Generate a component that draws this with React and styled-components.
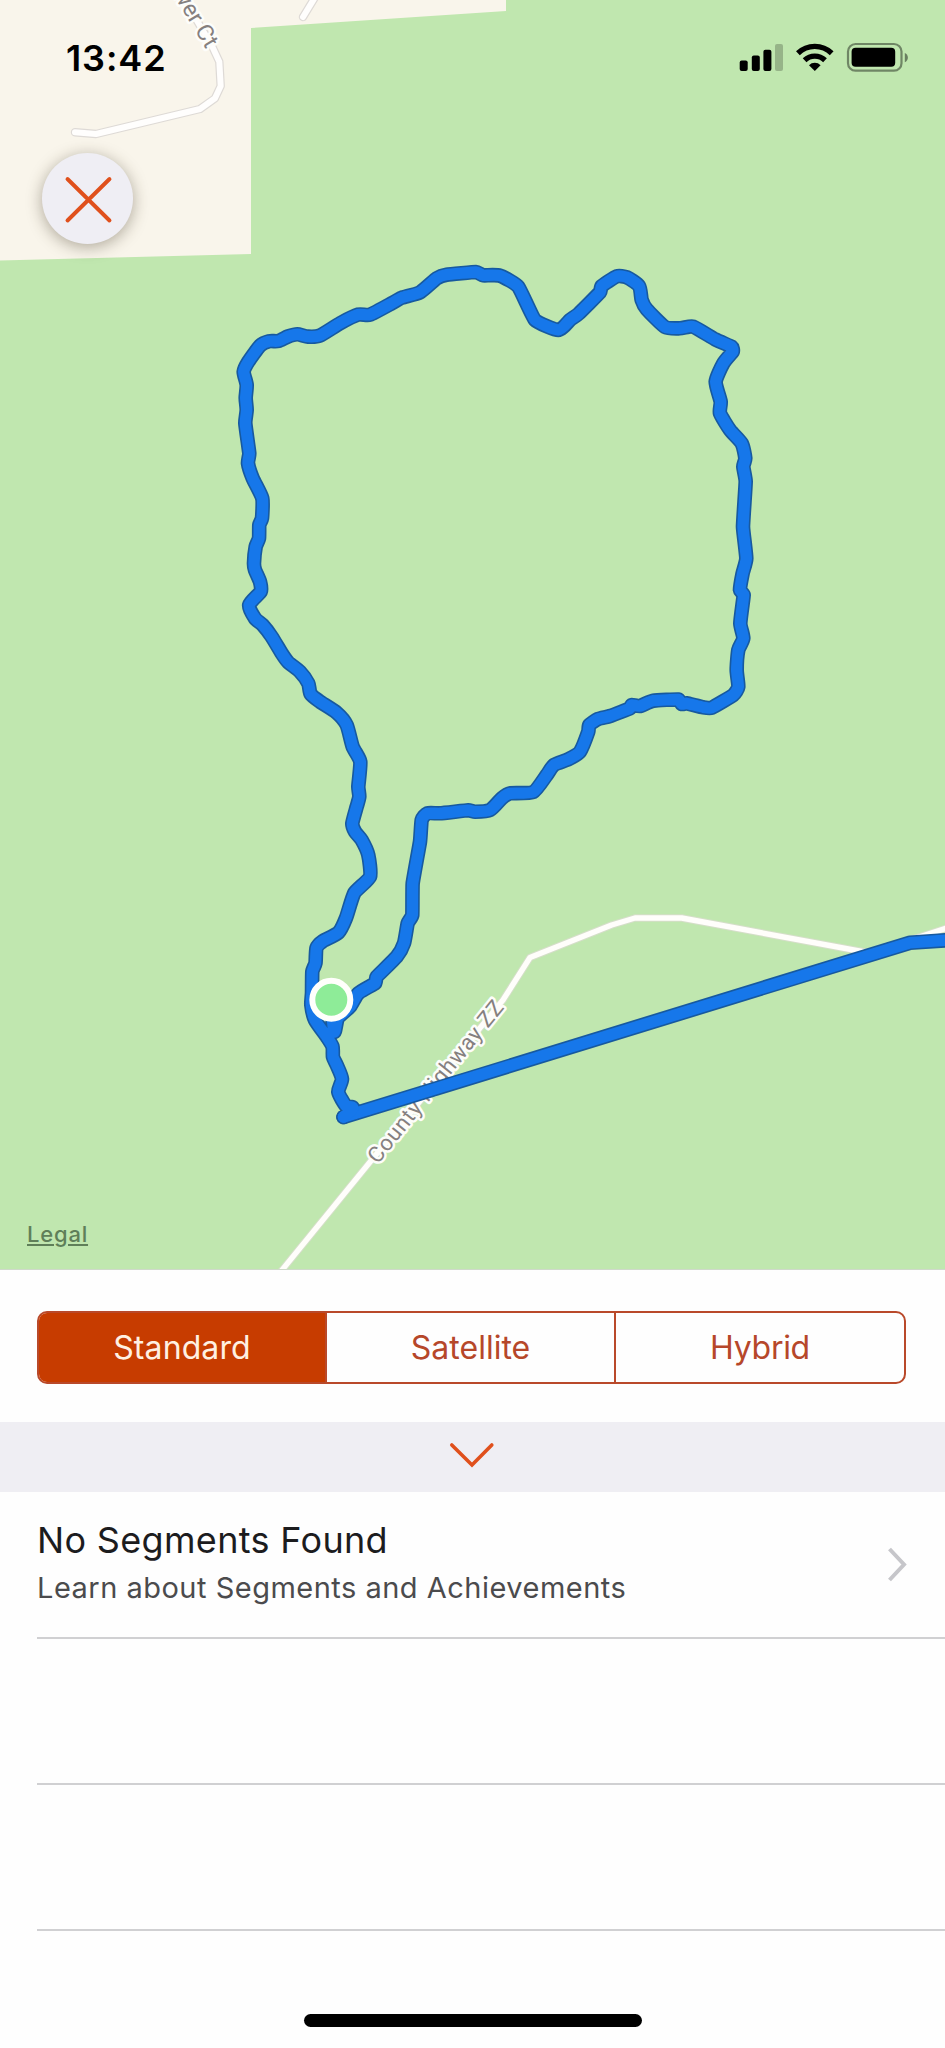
import React, { useState } from 'react';
import styled, { createGlobalStyle } from 'styled-components';

const GlobalStyle = createGlobalStyle`
  * { box-sizing: border-box; }
  body { margin: 0; background: #fefefe; font-family: Inter, "Liberation Sans", sans-serif; }
  button { font: inherit; border: 0; padding: 0; background: none; }
`;

const Screen = styled.main`
  width: 945px;
  height: 2048px;
  display: flex;
  flex-direction: column;
  background: #fefefe;
  overflow: hidden;
`;

const MapPane = styled.section`
  position: relative;
  flex: none;
  height: 1270px;
  background: #c0e7af;
  border-bottom: 1px solid #cfd9ca;
`;

const MapCanvas = styled.svg`
  display: block;
  width: 945px;
  height: 1269px;
`;

const StatusBar = styled.header`
  position: absolute;
  inset: 0 0 auto 0;
  height: 115px;
  padding: 0 36px 0 66px;
  display: flex;
  align-items: center;
  justify-content: space-between;
  color: #000;
`;

const Clock = styled.time`
  font-size: 36px;
  font-weight: 600;
  line-height: 44px;
  letter-spacing: 0.9px;
`;

const StatusIcons = styled.svg`
  display: block;
  width: 170px;
  height: 32px;
`;

const CloseButton = styled.button`
  position: absolute;
  top: 153px;
  left: 42px;
  width: 91px;
  height: 91px;
  display: grid;
  place-items: center;
  border-radius: 50%;
  background: #efeef4;
  box-shadow: 0 3px 16px rgba(60, 50, 30, 0.4);
`;

const LegalLink = styled.a`
  position: absolute;
  left: 27px;
  bottom: 21px;
  font-size: 22px;
  line-height: 28px;
  font-weight: 500;
  letter-spacing: 0.8px;
  color: #5f7f59;
  text-decoration: underline;
  text-decoration-thickness: 2px;
  text-underline-offset: 2px;
`;

const RoadLabel = styled.text`
  font-family: Roboto, "Liberation Sans", sans-serif;
  font-size: ${(p) => p.$size}px;
  fill: #85807f;
  stroke: #fdfdfa;
  stroke-width: 5px;
  stroke-linejoin: round;
  paint-order: stroke;
`;

const ModeBar = styled.div`
  flex: none;
  height: 152px;
  padding: 41px 39px 38px 37px;
`;

const Segmented = styled.div`
  display: grid;
  grid-template-columns: 286px 289px 1fr;
  height: 73px;
  border: 2px solid #b9492a;
  border-radius: 10px;
  overflow: hidden;
`;

const Segment = styled.button`
  font-size: 32px;
  line-height: 40px;
  letter-spacing: ${(p) => p.$tracking};
  color: ${(p) => (p.$active ? '#fff0e2' : '#b6472a')};
  background: ${(p) => (p.$active ? '#c73c00' : 'transparent')};
  & + & { border-left: 2px solid ${(p) => (p.$afterActive ? '#c73c00' : '#b9492a')}; }
`;

const DrawerHandle = styled.button`
  flex: none;
  height: 70px;
  display: flex;
  justify-content: center;
  align-items: center;
  background: #efeef3;
  padding: 0 2px 4px 0;
`;

const List = styled.ul`
  flex: none;
  margin: 0;
  padding: 0 0 0 37px;
  list-style: none;
`;

const Row = styled.li`
  display: flex;
  align-items: center;
  justify-content: space-between;
  height: ${(p) => p.$height}px;
  padding-right: 38px;
  border-bottom: 2px solid #d0d0d2;
`;

const RowText = styled.div`
  display: flex;
  flex-direction: column;
  gap: 4px;
  padding-bottom: 1px;
`;

const Title = styled.span`
  font-size: 36px;
  line-height: 44px;
  letter-spacing: 0.33px;
  color: #1c1c1e;
`;

const Subtitle = styled.span`
  font-size: 29px;
  line-height: 44px;
  letter-spacing: 0.49px;
  color: #4b4b4d;
`;

const HomeArea = styled.footer`
  flex: 1;
  display: flex;
  justify-content: center;
  align-items: flex-end;
  padding-bottom: 21px;
`;

const HomeIndicator = styled.div`
  width: 338px;
  height: 13px;
  border-radius: 7px;
  background: #000;
`;

const ROUTE = [
  [950, 940], [910, 942.7], [343.5, 1117], [353, 1108], [346, 1106], [338.3, 1092], [342, 1079],
  [336.7, 1065], [333, 1057], [332.5, 1046.5], [326.7, 1036.7], [315, 1020], [311.3, 1005],
  [312, 993], [312.3, 971.7], [315.5, 963], [316.5, 948], [323, 941], [338.5, 932.5], [346, 918],
  [354.3, 893], [370, 876.7], [368.3, 855], [361.7, 840], [355, 831.7], [352.3, 823.3],
  [356.7, 806.7], [359.3, 796.7], [358.3, 786.7], [360.3, 761.7], [352.7, 746.7], [346.7, 725],
  [336.7, 712.7], [320, 701.7], [310.7, 694], [308.3, 683.3], [300, 671.7], [288.3, 662.3],
  [281.7, 653.3], [271.7, 636.7], [262.7, 625], [255, 618.3], [249.2, 605], [260.7, 591.7],
  [260, 581.7], [255, 570], [254, 563.3], [255.7, 546.7], [259, 538.3], [259.3, 525],
  [262, 518.3], [262.3, 498.3], [252.7, 478.3], [248, 463.3], [249.3, 453.3], [245.3, 423.3],
  [246.7, 410], [245.7, 398], [246.7, 385], [243.7, 371.7], [248.3, 361.7], [260, 345.7],
  [269, 341.3], [278.3, 341], [288, 336.5], [297.3, 334.3], [308, 336.6], [320, 335.5],
  [340, 323.3], [358.3, 314.6], [370, 314.7], [391.7, 303.3], [401.7, 297.7], [420, 292.3],
  [436.7, 278.3], [446.7, 274.7], [476, 272], [483.3, 275.3], [500, 275.7], [518.3, 286.7],
  [535, 320], [558.3, 330], [570, 320], [578.3, 314], [600, 292.3], [601.7, 286],
  [616.7, 276.3], [626.7, 277.3], [639, 286], [641.7, 300], [646.7, 309.3], [665, 327],
  [680, 328.3], [693.3, 326.7], [715, 339.3], [731.7, 346.7], [732.7, 351.7], [723.3, 363.3],
  [715.7, 381.7], [720.7, 401.7], [720, 413.3], [730, 430], [741.7, 443.3], [745.3, 458.3],
  [743.3, 466.7], [745.7, 481.7], [743, 526.7], [746.3, 558.3], [742.5, 574], [740, 590],
  [743.7, 595], [740.3, 623.3], [743.3, 638.3], [738.3, 650], [736.7, 670], [738.3, 686.7],
  [733.3, 695], [711.7, 707.7], [703.3, 707.3], [686.7, 703.3], [681.7, 704], [678.3, 699.5],
  [653.3, 700.7], [640, 706], [631.7, 705], [630, 708.3], [610, 716], [598, 719], [589.3, 725],
  [588.3, 731.7], [580, 751.7], [568.3, 759.3], [554, 765], [546.7, 775], [533.3, 792],
  [510, 793.3], [501.7, 798.3], [490, 810], [475, 811.7], [468.3, 810.3], [440, 813.3],
  [427.3, 813.3], [421.7, 820], [420, 841.7], [412.7, 883.3], [412.3, 915], [407.7, 923.3],
  [404, 943.3], [396.7, 956.7], [376.7, 976.7], [375, 983.3], [358.3, 993.3], [350, 1006.7],
  [338, 1018], [334, 1031.5], [331, 1000],
];

// Softens the bends: each point's tangent is limited by its shorter neighbouring leg.
function smoothPath(points) {
  const dist = (a, b) => Math.hypot(b[0] - a[0], b[1] - a[1]);
  const handles = points.map((p, i) => {
    const prev = points[i - 1];
    const next = points[i + 1];
    if (!prev || !next) return [0, 0];
    const span = dist(prev, next) || 1;
    const reach = Math.min(dist(prev, p), dist(p, next), 16) * 0.24;
    return [((next[0] - prev[0]) / span) * reach, ((next[1] - prev[1]) / span) * reach];
  });
  return points.reduce((d, p, i) => {
    if (i === 0) return `M${p[0]} ${p[1]}`;
    const q = points[i - 1];
    const a = handles[i - 1];
    const b = handles[i];
    return `${d}C${q[0] + a[0]} ${q[1] + a[1]} ${p[0] - b[0]} ${p[1] - b[1]} ${p[0]} ${p[1]}`;
  }, '');
}
const routePath = smoothPath(ROUTE.slice(2));
const approachPath = 'M950 940L910 942.7L343.5 1117';

const MODES = [
  { name: 'Standard', tracking: '0.1px' },
  { name: 'Satellite', tracking: '0px' },
  { name: 'Hybrid', tracking: '-0.3px' },
];

function TrailMap() {
  return (
    <MapCanvas viewBox="0 0 945 1269" fill="none" strokeLinejoin="round" strokeLinecap="round">
      <path d="M0 0H506V11L251 28V254L0 260.5Z" fill="#f9f5eb" />
      {[['#dedad6', 8.4], ['#fffefd', 6]].map(([color, width]) => (
        <g key={color} stroke={color} strokeWidth={width}>
          <path d="M75 132.3L96 134L200 109L215 98.3L220.7 86L219.3 61.7L212 46L180 -8" />
          <path d="M303 17L317 -6" />
        </g>
      ))}
      {[['#d5dec9', 7.4], ['#fffefb', 5.4]].map(([color, width]) => (
        <g key={color} stroke={color} strokeWidth={width}>
          <path d="M278 1275L370 1162L503 1000L530 957.5L611.7 925L635 918H681.7L870 953L950 927" />
        </g>
      ))}
      <RoadLabel $size={22} transform="translate(435.5 1081.5) rotate(-51)" y="7.5" textAnchor="middle" textLength="202">County Highway ZZ</RoadLabel>
      <RoadLabel $size={23} transform="translate(212.5 45.5) rotate(59)" y="7.5" textAnchor="end">wer Ct</RoadLabel>
      {[['#17599f', 14.6], ['#1677ea', 11.4]].map(([color, width]) => (
        <g key={color} stroke={color} strokeWidth={width}>
          <path d={approachPath} />
          <path d={routePath} />
        </g>
      ))}
      <circle cx="331.3" cy="999.7" r="19" fill="#8eec98" stroke="#fffffc" strokeWidth="6" />
    </MapCanvas>
  );
}

function StatusGlyphs() {
  return (
    <StatusIcons viewBox="739 42 170 32" fill="none">
      <g fill="#000">
        <rect x="739.7" y="60.5" width="8" height="10.5" rx="2" />
        <rect x="751.8" y="55.5" width="8" height="15.5" rx="2" />
        <rect x="763.4" y="49.8" width="8" height="21.2" rx="2" />
        <rect x="775" y="44" width="8" height="27" rx="2" opacity="0.22" />
      </g>
      <g stroke="#000" strokeWidth="5.4">
        <path d="M797.9 53.2A24.4 24.4 0 0 1 831.7 53.2" />
        <path d="M804.6 60.2A14.8 14.8 0 0 1 825 60.2" />
      </g>
      <path d="M814.8 71L809 65.2A8.2 8.2 0 0 1 820.6 65.2Z" fill="#000" />
      <rect x="848" y="44" width="53.5" height="26.7" rx="7.5" stroke="#000" strokeOpacity="0.42" strokeWidth="2.2" />
      <rect x="851.6" y="47.8" width="43.6" height="19" rx="4" fill="#000" />
      <path d="M904.8 53C908.9 54.5 908.9 60.7 904.8 62.2Z" fill="#000" fillOpacity="0.45" />
    </StatusIcons>
  );
}

export default function App() {
  const [mode, setMode] = useState('Standard');
  return (
    <>
      <GlobalStyle />
      <Screen>
        <MapPane>
          <TrailMap />
          <StatusBar>
            <Clock>13:42</Clock>
            <StatusGlyphs />
          </StatusBar>
          <CloseButton aria-label="Close">
            <svg width="50" height="50" viewBox="0 0 50 50" fill="none" stroke="#e0501c" strokeWidth="3.9" strokeLinecap="round">
              <path d="M4.5 5L46.5 46.5M46.5 5L4.5 46.5" />
            </svg>
          </CloseButton>
          <LegalLink>Legal</LegalLink>
        </MapPane>
        <ModeBar>
          <Segmented>
            {MODES.map(({ name, tracking }, i) => (
              <Segment
                key={name}
                $active={mode === name}
                $afterActive={i > 0 && MODES[i - 1].name === mode}
                $tracking={tracking}
                onClick={() => setMode(name)}
              >
                {name}
              </Segment>
            ))}
          </Segmented>
        </ModeBar>
        <DrawerHandle aria-label="Collapse">
          <svg width="46" height="26" viewBox="0 0 46 26" fill="none" stroke="#e0501c" strokeWidth="3.6" strokeLinecap="round">
            <path d="M2.8 3L23 23L42.8 3" />
          </svg>
        </DrawerHandle>
        <List>
          <Row $height={147}>
            <RowText>
              <Title>No Segments Found</Title>
              <Subtitle>Learn about Segments and Achievements</Subtitle>
            </RowText>
            <svg width="20" height="36" viewBox="0 0 20 36" fill="none" stroke="#c6c6ca" strokeWidth="4">
              <path d="M2.5 2L17 17.5L2.5 33" />
            </svg>
          </Row>
          <Row $height={146} />
          <Row $height={146} />
        </List>
        <HomeArea>
          <HomeIndicator />
        </HomeArea>
      </Screen>
    </>
  );
}
